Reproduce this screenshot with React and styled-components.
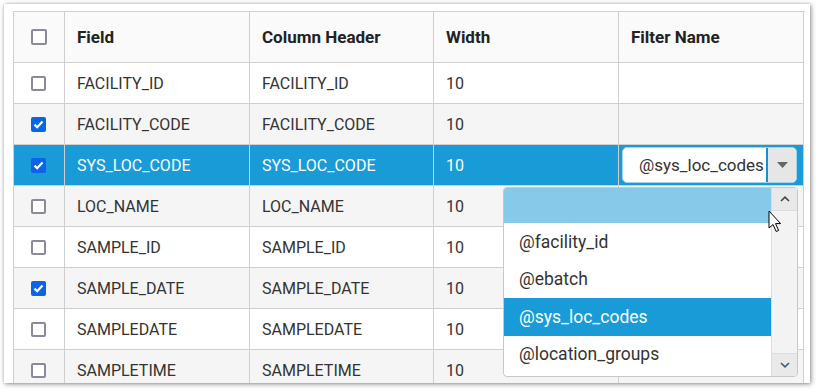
import React from "react";
import styled, { createGlobalStyle } from "styled-components";

const Global = createGlobalStyle`
  html, body { margin: 0; padding: 0; background: #ffffff; }
  body { font-family: Roboto, "Liberation Sans", sans-serif; }
`;

const Page = styled.div`
  width: 820px;
  height: 392px;
  padding: 4px 0 0 4px;
  box-sizing: border-box;
  background: #fff;
`;

const Panel = styled.div`
  position: relative;
  width: 806px;
  height: 379px;
  background: #ffffff;
  box-shadow: 1px 1px 5px rgba(0, 0, 0, 0.45), 0 0 2px rgba(0,0,0,0.12);
  overflow: hidden;
  padding: 7px 0 0 9px;
  box-sizing: border-box;
`;

const Grid = styled.div`
  display: grid;
  grid-template-columns: 51px 185px 184px 185px 185px;
  grid-auto-rows: 41px;
  grid-template-rows: 51px;
  border-left: 1px solid #cfcfcf;
  border-top: 1px solid #cfcfcf;
  width: 791px;
`;

const Cell = styled.div`
  border-right: 1px solid #cfcfcf;
  border-bottom: 1px solid #cfcfcf;
  display: flex;
  align-items: center;
  padding-left: ${(p) => (p.$center ? "0" : "12px")};
  justify-content: ${(p) => (p.$center ? "center" : "flex-start")};
  background: ${(p) => p.$bg};
  color: ${(p) => (p.$sel ? "#ffffff" : "#333333")};
  font-size: 16px;
  font-weight: ${(p) => (p.$head ? 700 : 400)};
  box-sizing: border-box;
  position: relative;
  white-space: nowrap;
`;

const HeadText = styled.span`
  color: #222;
  font-size: 17px;
`;

const Box = styled.span`
  width: ${(p) => (p.$big ? 16 : 15)}px;
  height: ${(p) => (p.$big ? 16 : 15)}px;
  box-sizing: border-box;
  border-radius: 2px;
  border: ${(p) => (p.$on ? "none" : "2px solid #8c8a9a")};
  background: ${(p) => (p.$on ? "#0b63e5" : "#fff")};
  display: inline-flex;
  align-items: center;
  justify-content: center;
  margin-left: ${(p) => (p.$big ? 0 : -2)}px;
`;

const ComboWrap = styled.div`
  position: absolute;
  left: 3px;
  top: 2px;
  width: 175px;
  height: 36px;
  background: #fff;
  border-radius: 5px;
  border: 1px solid #9fd3ee;
  box-sizing: border-box;
  display: flex;
  overflow: hidden;
`;

const ComboText = styled.div`
  flex: 1;
  display: flex;
  align-items: center;
  padding-left: 16px;
  color: #333;
  font-size: 17px;
  border-right: 2px solid #1a8fd0;
  white-space: nowrap;
  overflow: hidden;
`;

const ComboBtn = styled.div`
  width: 28px;
  background: #e6e6e6;
  display: flex;
  align-items: center;
  justify-content: center;
`;

const List = styled.div`
  position: absolute;
  left: 499px;
  top: 183px;
  width: 295px;
  height: 190px;
  background: #fff;
  border: 1px solid #c8c8c8;
  border-radius: 4px;
  box-sizing: border-box;
  display: flex;
  overflow: hidden;
`;

const Items = styled.div`
  flex: 1;
  display: flex;
  flex-direction: column;
`;

const Item = styled.div`
  height: ${(p) => (p.$blank ? 35 : 37.5)}px;
  flex: none;
  display: flex;
  align-items: center;
  padding-left: 15px;
  font-size: 17.5px;
  background: ${(p) => p.$bg || "#fff"};
  color: ${(p) => (p.$sel ? "#ffffff" : "#333")};
`;

const Scroll = styled.div`
  width: 25px;
  background: #f3f3f3;
  border-left: 1px solid #dcdcdc;
  display: flex;
  flex-direction: column;
  justify-content: space-between;
`;

const ScrollBtn = styled.div`
  height: 22px;
  background: #e9e9e9;
  display: flex;
  align-items: center;
  justify-content: center;
  border-top: ${(p) => (p.$bottom ? "1px solid #dcdcdc" : "none")};
  border-bottom: ${(p) => (p.$bottom ? "none" : "1px solid #dcdcdc")};
`;

const Cursor = styled.svg`
  position: absolute;
  left: 764px;
  top: 206px;
`;

const Check = () => (
  <svg width="11" height="9" viewBox="0 0 11 9">
    <path d="M1.5 4.6 L4.2 7.2 L9.5 1.6" stroke="#fff" strokeWidth="2.2" fill="none" />
  </svg>
);

const rows = [
  ["FACILITY_ID", "FACILITY_ID", "10", false],
  ["FACILITY_CODE", "FACILITY_CODE", "10", true],
  ["SYS_LOC_CODE", "SYS_LOC_CODE", "10", true, true],
  ["LOC_NAME", "LOC_NAME", "10", false],
  ["SAMPLE_ID", "SAMPLE_ID", "10", false],
  ["SAMPLE_DATE", "SAMPLE_DATE", "10", true],
  ["SAMPLEDATE", "SAMPLEDATE", "10", false],
  ["SAMPLETIME", "SAMPLETIME", "10", false],
];

export default function App() {
  return (
    <>
      <Global />
      <Page>
        <Panel>
          <Grid>
            <Cell $center $head $bg="#fafafa">
              <Box $big />
            </Cell>
            {["Field", "Column Header", "Width", "Filter Name"].map((h) => (
              <Cell key={h} $head $bg="#fafafa">
                <HeadText>{h}</HeadText>
              </Cell>
            ))}
            {rows.map(([f, c, w, on, sel], i) => {
              const bg = sel ? "#189bd6" : i % 2 === 0 ? "#ffffff" : "#f5f5f5";
              return (
                <React.Fragment key={f}>
                  <Cell $center $bg={bg}>
                    <Box $on={on}>{on && <Check />}</Box>
                  </Cell>
                  <Cell $bg={bg} $sel={sel}>{f}</Cell>
                  <Cell $bg={bg} $sel={sel}>{c}</Cell>
                  <Cell $bg={bg} $sel={sel}>{w}</Cell>
                  <Cell $bg={bg} $sel={sel}>
                    {sel && (
                      <ComboWrap>
                        <ComboText>@sys_loc_codes</ComboText>
                        <ComboBtn>
                          <svg width="11" height="6" viewBox="0 0 11 6">
                            <path d="M0 0 H11 L5.5 6 Z" fill="#666" />
                          </svg>
                        </ComboBtn>
                      </ComboWrap>
                    )}
                  </Cell>
                </React.Fragment>
              );
            })}
          </Grid>
          <List>
            <Items>
              <Item $blank $bg="#86c9e8" />
              <Item>@facility_id</Item>
              <Item>@ebatch</Item>
              <Item $sel $bg="#189bd6">@sys_loc_codes</Item>
              <Item>@location_groups</Item>
            </Items>
            <Scroll>
              <ScrollBtn>
                <svg width="10" height="6" viewBox="0 0 10 6">
                  <path d="M1 5 L5 1.2 L9 5" stroke="#444" strokeWidth="1.6" fill="none" />
                </svg>
              </ScrollBtn>
              <ScrollBtn $bottom>
                <svg width="10" height="6" viewBox="0 0 10 6">
                  <path d="M1 1 L5 4.8 L9 1" stroke="#3a5a80" strokeWidth="1.6" fill="none" />
                </svg>
              </ScrollBtn>
            </Scroll>
          </List>
          <Cursor width="16" height="26" viewBox="0 0 16 26">
            <path
              d="M1 1 L1 18 L5 14.5 L8.2 21.5 L10.6 20.4 L7.5 13.6 L12.6 13.6 Z"
              fill="#fff"
              stroke="#000"
              strokeWidth="1"
              strokeLinejoin="miter"
            />
          </Cursor>
        </Panel>
      </Page>
    </>
  );
}
